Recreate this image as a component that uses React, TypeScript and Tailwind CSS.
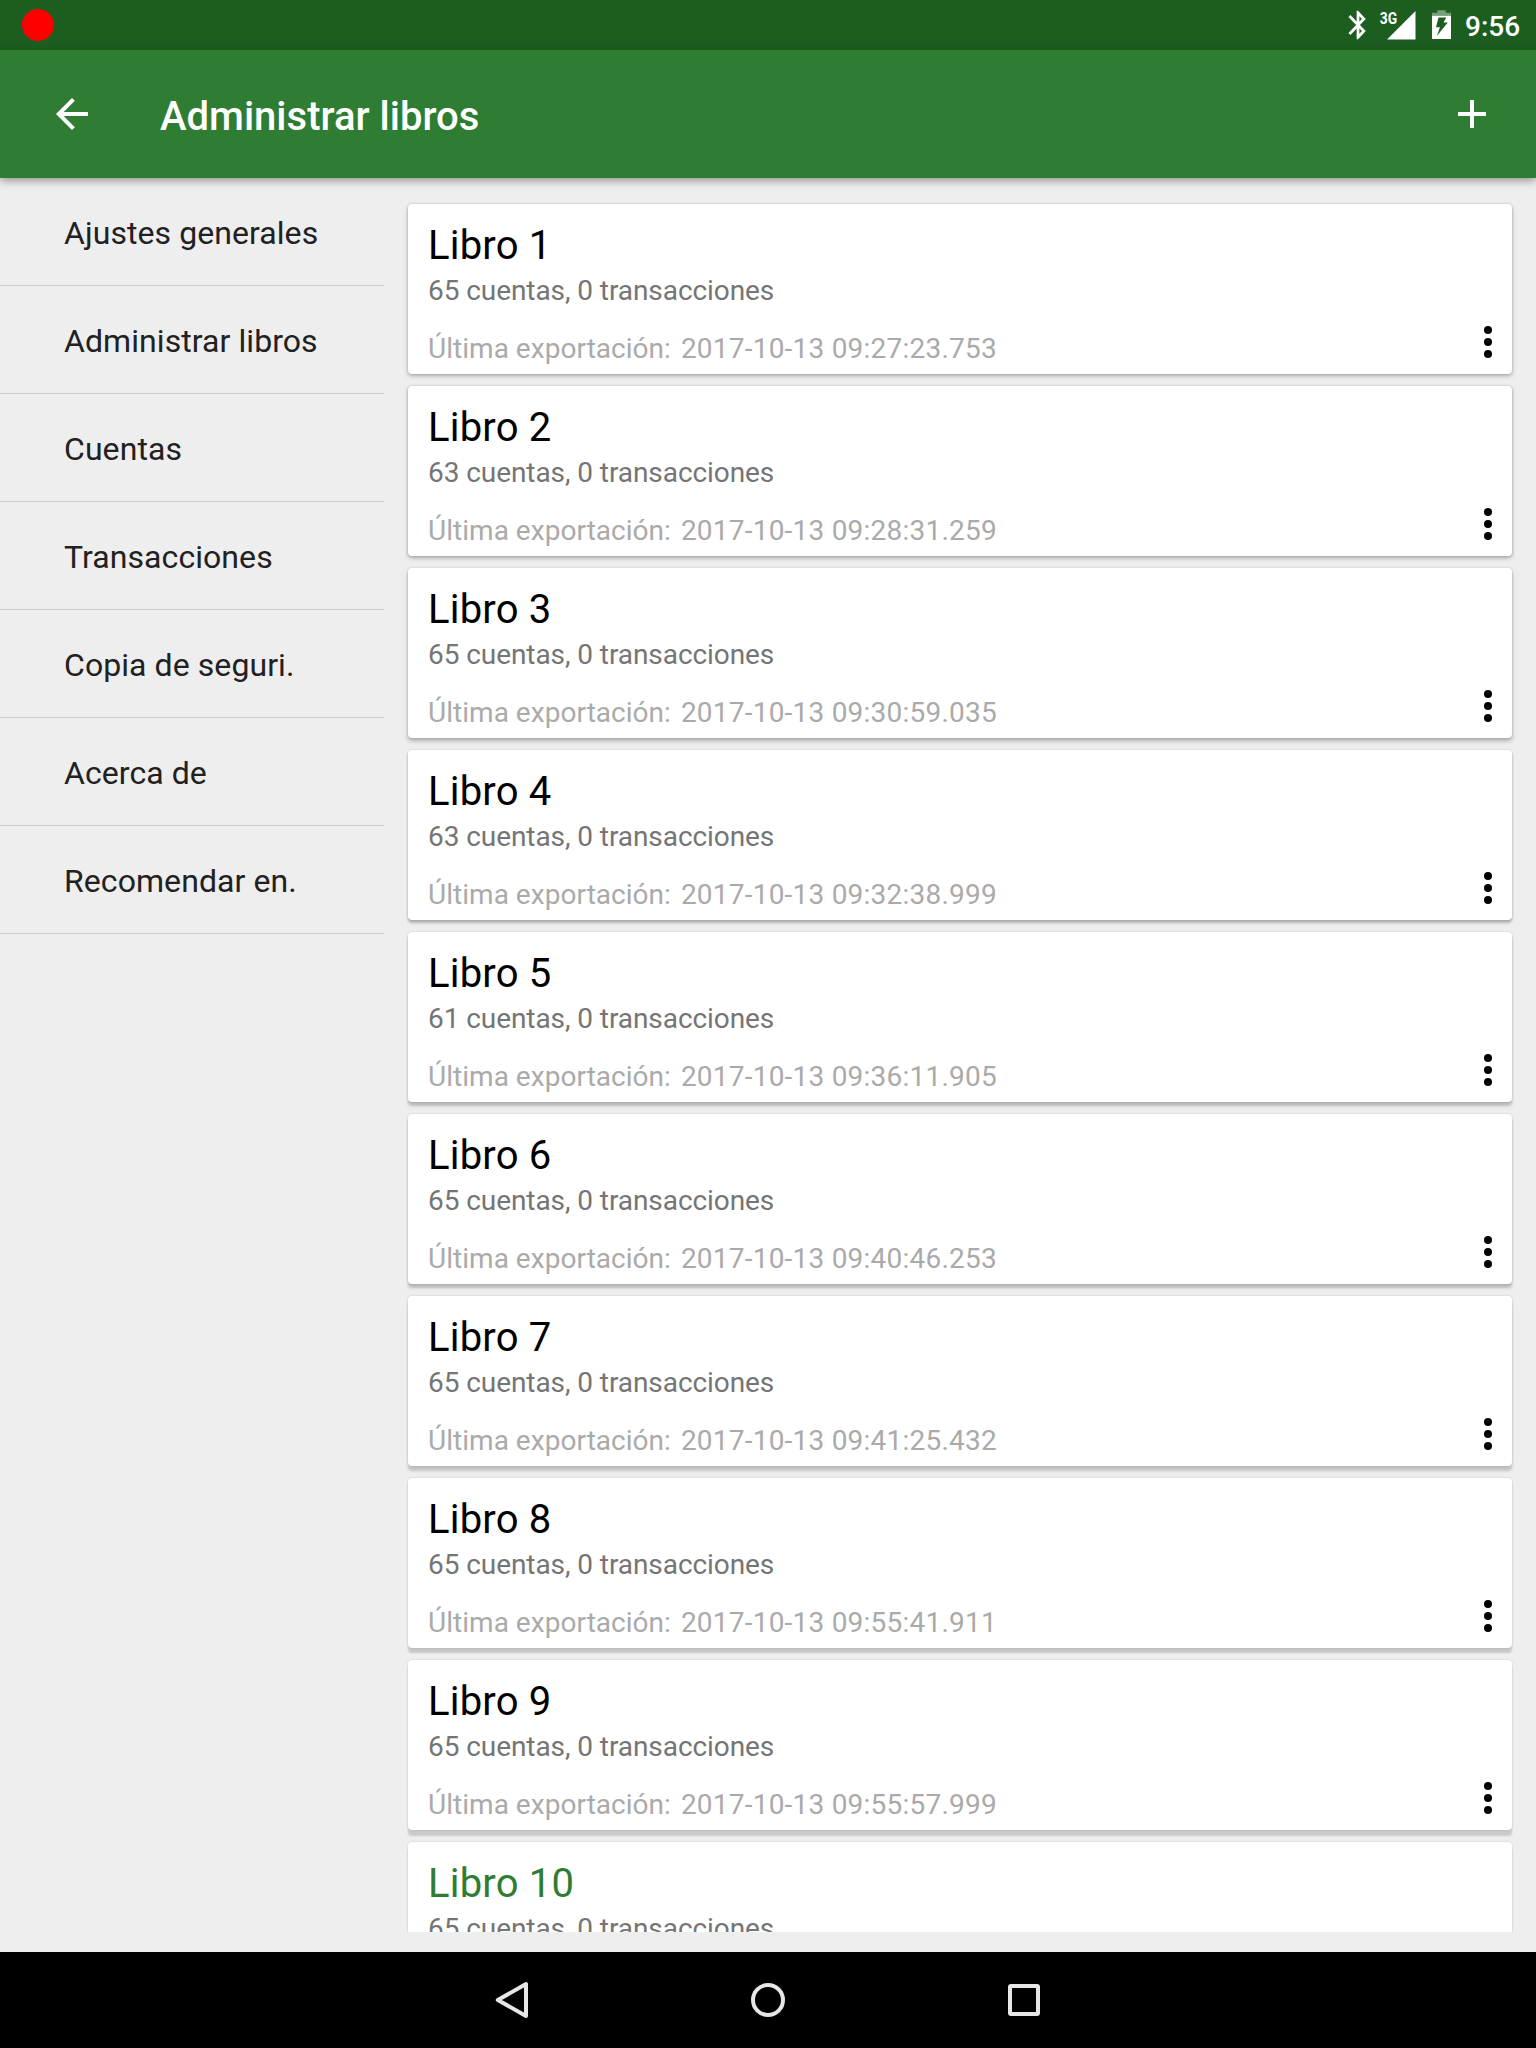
const menu = [
  'Ajustes generales',
  'Administrar libros',
  'Cuentas',
  'Transacciones',
  'Copia de seguri.',
  'Acerca de',
  'Recomendar en.',
];

const books = [
  { name: 'Libro 1', accounts: 65, date: '2017-10-13 09:27:23.753', shadow: 'shadow-[0_2px_4px_rgba(0,0,0,0.28),0_0_2px_rgba(0,0,0,0.18)]' },
  { name: 'Libro 2', accounts: 63, date: '2017-10-13 09:28:31.259', shadow: 'shadow-[0_2px_4px_rgba(0,0,0,0.30),0_0_2px_rgba(0,0,0,0.18)]' },
  { name: 'Libro 3', accounts: 65, date: '2017-10-13 09:30:59.035', shadow: 'shadow-[0_3px_4px_rgba(0,0,0,0.27),0_0_2px_rgba(0,0,0,0.18)]' },
  { name: 'Libro 4', accounts: 63, date: '2017-10-13 09:32:38.999', shadow: 'shadow-[0_3px_3px_rgba(0,0,0,0.25),0_0_2px_rgba(0,0,0,0.18)]' },
  { name: 'Libro 5', accounts: 61, date: '2017-10-13 09:36:11.905', shadow: 'shadow-[0_4px_3px_rgba(0,0,0,0.22),0_0_2px_rgba(0,0,0,0.18)]' },
  { name: 'Libro 6', accounts: 65, date: '2017-10-13 09:40:46.253', shadow: 'shadow-[0_4px_3px_rgba(0,0,0,0.21),0_0_2px_rgba(0,0,0,0.18)]' },
  { name: 'Libro 7', accounts: 65, date: '2017-10-13 09:41:25.432', shadow: 'shadow-[0_5px_3px_rgba(0,0,0,0.18),0_0_2px_rgba(0,0,0,0.18)]' },
  { name: 'Libro 8', accounts: 65, date: '2017-10-13 09:55:41.911', shadow: 'shadow-[0_5px_2px_rgba(0,0,0,0.16),0_0_2px_rgba(0,0,0,0.18)]' },
  { name: 'Libro 9', accounts: 65, date: '2017-10-13 09:55:57.999', shadow: 'shadow-[0_6px_2px_rgba(0,0,0,0.15),0_0_2px_rgba(0,0,0,0.16)]' },
  { name: 'Libro 10', accounts: 65, date: '2017-10-13 09:56:04.120', shadow: 'shadow-[0_6px_2px_rgba(0,0,0,0.15),0_0_2px_rgba(0,0,0,0.16)]', active: true },
];

function StatusBar() {
  return (
    <div className="flex h-[50px] shrink-0 items-center bg-[#1b5e20] pl-[22px]">
      <div className="h-8 w-8 rounded-full bg-[#ff0000]" />
      <svg className="ml-auto h-[50px] w-[112px] shrink-0" viewBox="1340 0 112 50" fill="none">
        <path
          transform="translate(1341.7 7.96) scale(1.36 1.42)"
          fill="white"
          d="M17.71 7.71L12 2h-1v7.59L6.41 5 5 6.41 10.59 12 5 17.59 6.41 19 11 14.41V22h1l5.71-5.71-4.300-4.290 4.300-4.290zM13 5.830l1.880 1.880L13 9.590V5.830zm1.880 10.460L13 18.170v-3.760l1.880 1.880z"
        />
        <path d="M1415.5 11V39.5H1387Z" fill="white" />
        <text transform="translate(1379.700 23.500) scale(0.84 1)" fill="white" fontFamily="Roboto" fontWeight="700" fontSize="16.5">3G</text>
        <path d="M1437.3 10.300h8.400v2.400h5.300v3h-19v-3h5.300z" fill="white" fillOpacity=".4" />
        <path fillRule="evenodd" d="M1432 15.700H1451V39H1432ZM1438.500 17.500L1436 27.300H1440L1436.800 36L1447.800 22.500H1443.500L1446.200 17.500Z" fill="white" />
      </svg>
      <span className="mt-[3px] ml-[13px] w-[71px] text-[28px] leading-none font-medium text-white">9:56</span>
    </div>
  );
}

function Toolbar() {
  return (
    <header className="relative z-10 flex h-32 shrink-0 items-center bg-[#2e7d32] pr-10 pl-12 shadow-[0_3px_8px_rgba(0,0,0,0.36)]">
      <svg className="h-12 w-12 shrink-0" viewBox="0 0 24 24" fill="white">
        <path d="M20 11H7.830l5.590-5.590L12 4l-8 8 8 8 1.410-1.410L7.830 13H20v-2z" />
      </svg>
      <h1 className="mt-[5px] ml-16 text-[40px] leading-none font-medium text-white">Administrar libros</h1>
      <svg className="ml-auto h-12 w-12 shrink-0" viewBox="0 0 24 24" fill="white">
        <path d="M19 13h-6v6h-2v-6H5v-2h6V5h2v6h6v2z" />
      </svg>
    </header>
  );
}

export default function App() {
  return (
    <div className="flex h-[2048px] w-[1536px] flex-col overflow-hidden bg-[#eeeeee] font-[Roboto,sans-serif]">
      <StatusBar />
      <Toolbar />
      <div className="flex min-h-0 flex-1">
        <nav className="w-96 shrink-0">
          {menu.map((m) => (
            <div key={m} className="flex h-[108px] items-center border-b border-[#cccccc] pl-16 text-[32px] leading-none tracking-[0.07px] text-[#212121]">
              <span className="mt-[3px]">{m}</span>
            </div>
          ))}
        </nav>
        <main className="mb-5 flex flex-1 flex-col gap-3 overflow-hidden pt-[26px] pr-6 pl-6">
          {books.map((b) => (
            <article key={b.name} className={`flex h-[170px] shrink-0 rounded-[4px] bg-white pl-5 ${b.shadow}`}>
              <div className="flex flex-1 flex-col pt-[18px]">
                <h2 className={`text-[40px] leading-[48px] tracking-[0.2px] ${b.active ? 'text-[#2e7d32]' : 'text-black'}`}>{b.name}</h2>
                <p className="mt-[5px] text-[28px] leading-[32px] tracking-[-0.07px] text-[#757575]">{b.accounts} cuentas, 0 transacciones</p>
                <p className="mt-[26px] flex gap-[10px] text-[28px] leading-[32px] text-[#aaaaaa]">
                  <span className="tracking-[0.03px]">Última exportación:</span>
                  <span className="tracking-[0.22px]">{b.date}</span>
                </p>
              </div>
              <svg className="mt-[114px] h-12 w-12" viewBox="0 0 24 24" fill="black">
                <circle cx="12" cy="6" r="2" />
                <circle cx="12" cy="12" r="2" />
                <circle cx="12" cy="18" r="2" />
              </svg>
            </article>
          ))}
        </main>
      </div>
      <footer className="flex h-24 shrink-0 items-center justify-center gap-52 bg-black">
        <svg className="h-12 w-12" viewBox="0 0 48 48" fill="none" stroke="#e6e6e6" strokeWidth="4" strokeLinejoin="round">
          <path d="M9.800 24L38 8V40Z" />
        </svg>
        <svg className="h-12 w-12" viewBox="0 0 48 48" fill="none" stroke="#e6e6e6" strokeWidth="4">
          <circle cx="24" cy="24" r="15" />
        </svg>
        <svg className="h-12 w-12" viewBox="0 0 48 48" fill="none" stroke="#e6e6e6" strokeWidth="4">
          <rect x="10" y="10" width="28" height="28" rx="1" />
        </svg>
      </footer>
    </div>
  );
}
